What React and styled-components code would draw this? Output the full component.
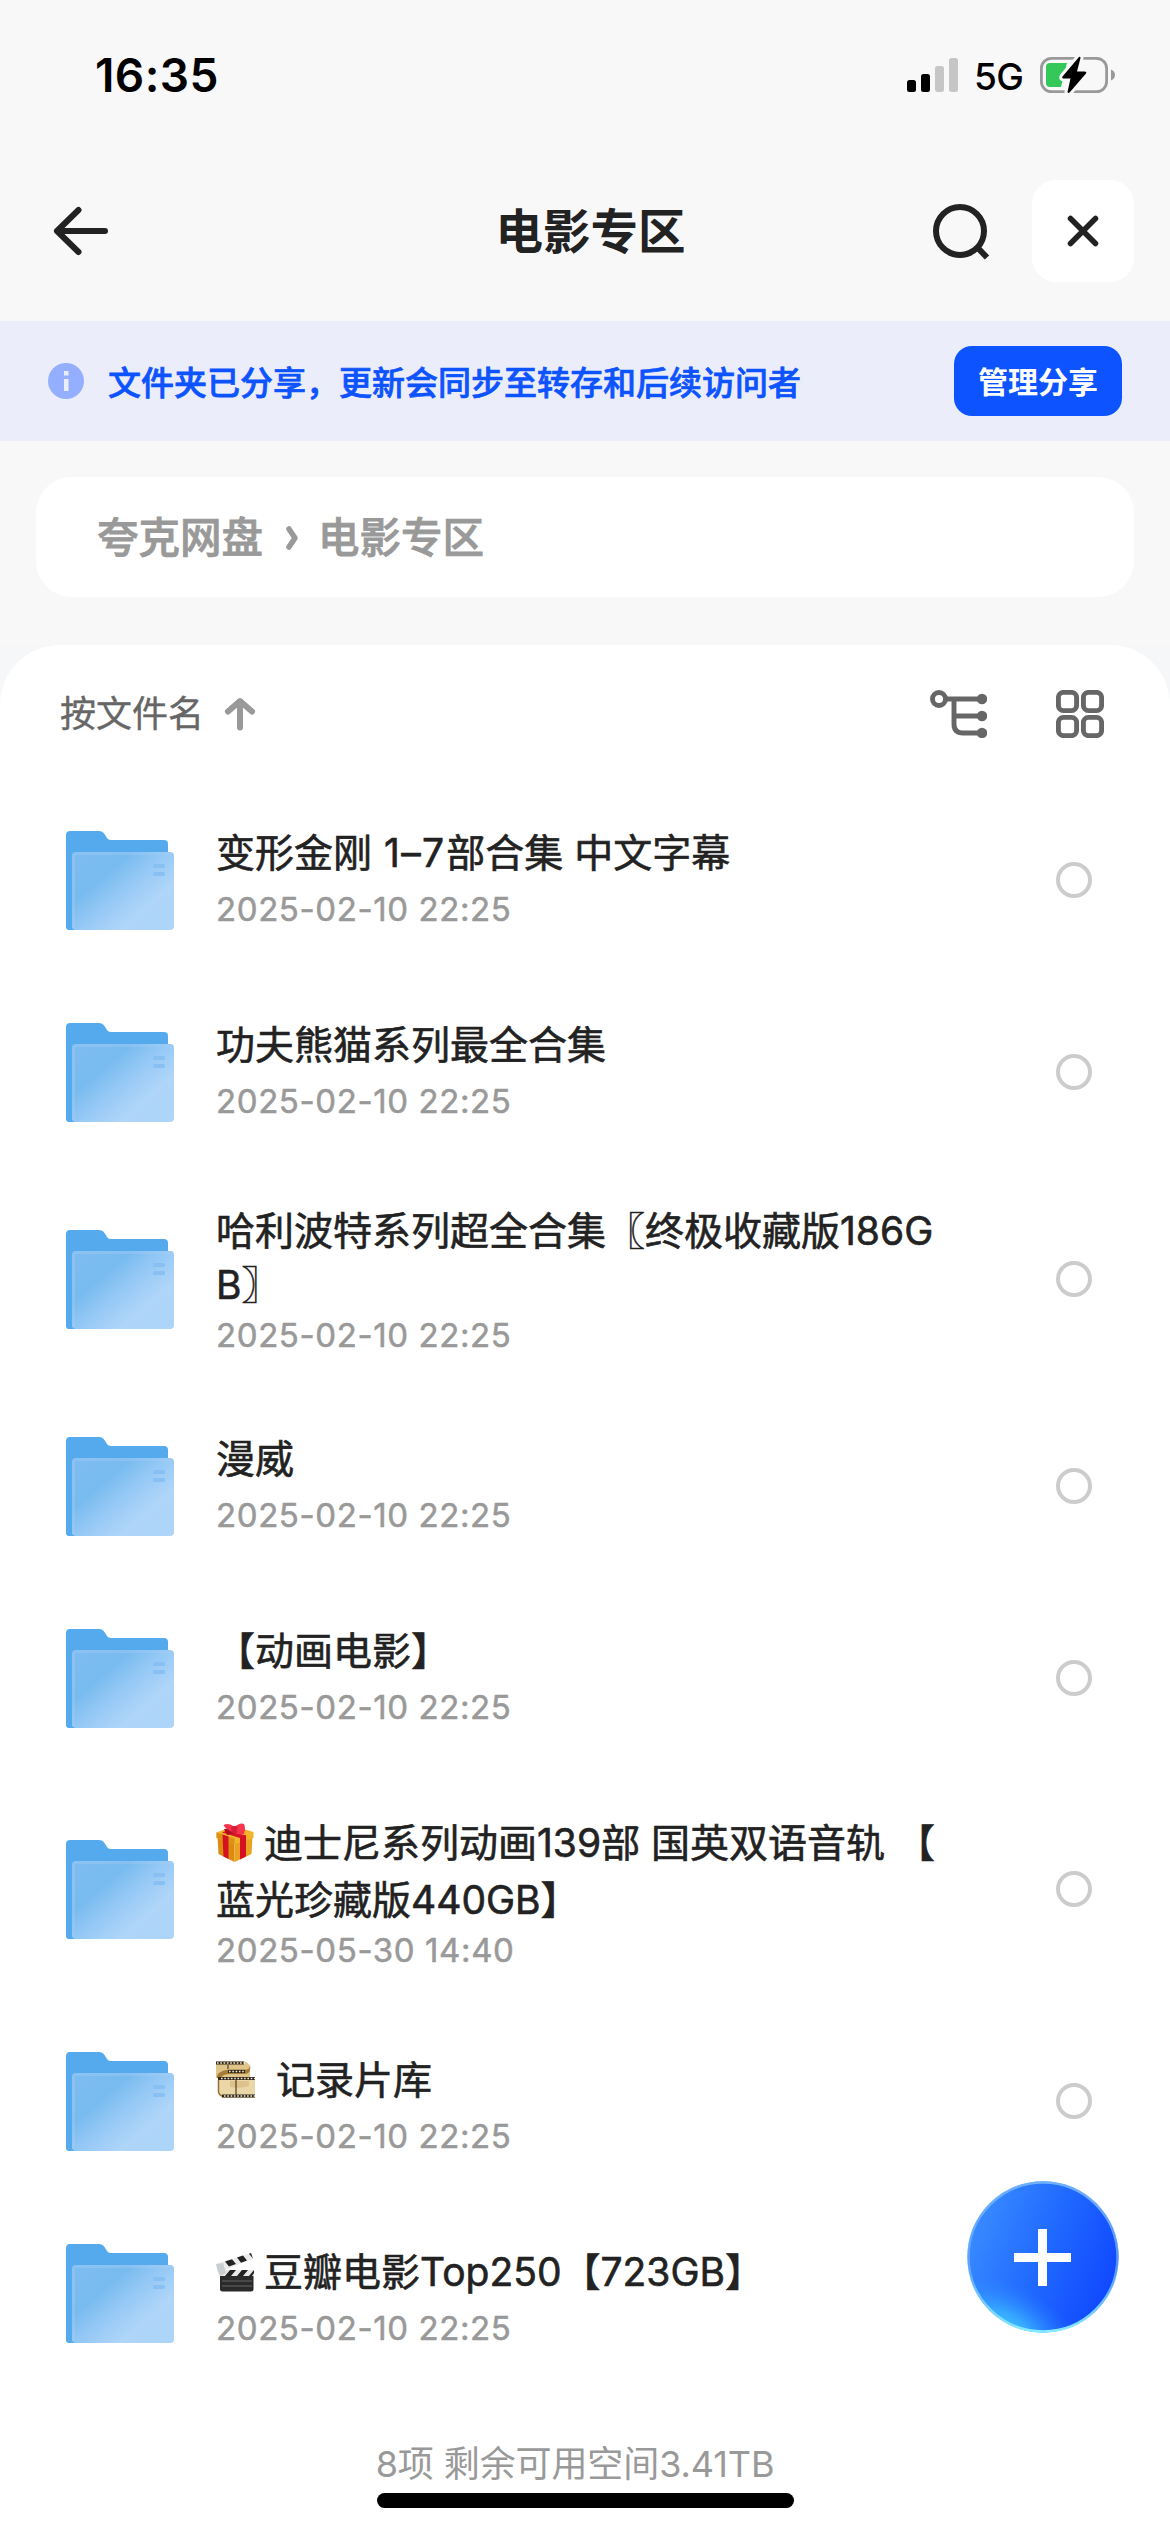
import React from 'react';
import styled, { createGlobalStyle } from 'styled-components';

const Global = createGlobalStyle`
  * { box-sizing: border-box; }
  body { margin: 0; background: #f8f8f8; }
`;

const Screen = styled.div`
  width: 1170px;
  height: 2532px;
  overflow: hidden;
  position: relative;
  display: flex;
  flex-direction: column;
  background: #f8f8f8;
  color: #222;
  font-family: Inter, "Noto Sans CJK SC", sans-serif;
`;

const StatusBar = styled.div`
  height: 141px;
  padding: 9px 55px 0 95px;
  display: flex;
  align-items: center;
  justify-content: space-between;
  color: #000;
`;
const Clock = styled.div`
  font-size: 46px;
  font-weight: 600;
  line-height: 54px;
  letter-spacing: 0.4px;
`;
const StatusIcons = styled.div`
  display: flex;
  align-items: center;
`;
const Network = styled.div`
  width: 51px;
  margin: 3px 15px 0 16px;
  font-size: 37px;
  font-weight: 500;
  line-height: 44px;
  letter-spacing: -0.7px;
  white-space: nowrap;
`;

const NavBar = styled.header`
  height: 180px;
  padding: 39px 36px 39px 50px;
  display: grid;
  grid-template-columns: 212px 1fr 212px;
  align-items: center;
`;
const Title = styled.h1`
  margin: 0;
  padding: 2px 3px 0 0;
  text-align: center;
  font-size: 47.5px;
  line-height: 60px;
  font-weight: 700;
`;
const NavActions = styled.div`
  display: flex;
  align-items: center;
  justify-content: flex-end;
  gap: 39px;
`;
const CloseButton = styled.button`
  width: 102px;
  height: 102px;
  padding: 0;
  border: 0;
  border-radius: 24px;
  background: #fff;
  display: grid;
  place-items: center;
`;

const Banner = styled.div`
  height: 120px;
  padding: 0 48px;
  display: flex;
  align-items: center;
  background: #ebeefa;
`;
const BannerText = styled.div`
  flex: 1;
  margin-left: 24px;
  padding-top: 4px;
  font-size: 33px;
  line-height: 48px;
  font-weight: 500;
  color: #0d53ff;
  -webkit-text-stroke: 0.7px currentColor;
`;
const ManageButton = styled.button`
  width: 168px;
  height: 70px;
  padding: 1px 0 0;
  border: 0;
  border-radius: 18px;
  background: #0d53ff;
  color: #fff;
  font: 700 30px/44px Inter, "Noto Sans CJK SC", sans-serif;
`;

const Crumbs = styled.nav`
  height: 120px;
  margin: 36px 36px 48px;
  padding: 2px 61px 0;
  border-radius: 36px;
  background: #fff;
  display: flex;
  align-items: center;
  font-size: 41.5px;
  line-height: 60px;
  font-weight: 500;
  color: #999;
  -webkit-text-stroke: 0.8px currentColor;
`;

const PanelWrap = styled.div`
  flex: 1;
  background: #f5f7f9;
`;
const Panel = styled.main`
  height: 100%;
  border-radius: 60px 60px 0 0;
  background: #fff;
  display: flex;
  flex-direction: column;
`;
const SortBar = styled.div`
  height: 139px;
  padding: 0 66px 0 60px;
  display: flex;
  align-items: center;
`;
const SortLabel = styled.div`
  flex: 1;
  display: flex;
  align-items: center;
  gap: 20px;
  font-size: 36px;
  line-height: 52px;
  color: #666;
  -webkit-text-stroke: 0.4px currentColor;
  padding-bottom: 1px;
`;
const ViewIcons = styled.div`
  display: flex;
  align-items: center;
  gap: 69px;
  padding-bottom: 1px;
`;

const Row = styled.div`
  height: ${p => p.$height}px;
  padding: 0 78px 0 66px;
  display: flex;
  align-items: center;
`;
const RowText = styled.div`
  flex: 1;
  align-self: flex-start;
  margin-left: 42px;
  padding-top: ${p => p.$top}px;
`;
const Name = styled.div`
  font-size: 39px;
  line-height: ${p => p.$line}px;
  -webkit-text-stroke: 0.6px currentColor;
`;
const NameLine = styled.div`
  height: ${p => p.$line}px;
  display: flex;
  align-items: center;
  white-space: pre;
`;
const Range = styled.span`
  letter-spacing: 1.3px;
  padding: 0 1px;
`;
const Emoji = styled.svg`
  width: 39px;
  height: 39px;
  flex: none;
  margin-right: ${p => p.$gap}px;
`;
const Stamp = styled.div`
  margin-top: ${p => p.$gap}px;
  font-size: 33px;
  line-height: 42px;
  letter-spacing: 0.6px;
  color: #999;
  -webkit-text-stroke: 0.5px currentColor;
`;
const Radio = styled.span`
  width: 36px;
  height: 36px;
  margin-bottom: 1px;
  border: 4px solid #ccc;
  border-radius: 50%;
  visibility: ${p => (p.$hidden ? 'hidden' : 'visible')};
`;

const Footer = styled.footer`
  flex: 1;
  display: flex;
  flex-direction: column;
  align-items: center;
  padding-top: 49px;
  font-size: 36px;
  line-height: 52px;
  color: #999;
`;
const Usage = styled.div`
  padding-right: 20px;
  letter-spacing: -0.1px;
`;
const HomeIndicator = styled.div`
  width: 417px;
  height: 15px;
  margin-top: 3px;
  border-radius: 8px;
  background: #000;
`;

const Fab = styled.button`
  position: absolute;
  left: 967px;
  top: 2181px;
  width: 152px;
  height: 152px;
  padding: 0;
  border: 0;
  background: none;
  svg { display: block; }
`;

const Signal = () => (
  <svg width="51" height="36" viewBox="0 0 51 36">
    <rect x="0" y="23" width="9" height="12" rx="2.5" />
    <rect x="14" y="17" width="9" height="18" rx="2.5" />
    <rect x="28" y="9" width="9" height="26" rx="2.5" fill="#c6c6c6" />
    <rect x="42" y="1" width="9" height="34" rx="2.5" fill="#c6c6c6" />
  </svg>
);

const Battery = () => (
  <svg width="75" height="38" viewBox="0 0 75 38">
    <rect x="1.4" y="2.4" width="65.2" height="33.2" rx="10" fill="none" stroke="#999" strokeWidth="2.8" />
    <path d="M71 13.5c2.6 1 4 3 4 5.500s-1.400 4.500-4 5.500z" fill="#999" />
    <path d="M10 7H27L21 31H10a4 4 0 0 1-4-4V11a4 4 0 0 1 4-4z" fill="#34c759" />
    <path d="M39 1L22.500 20.500Q21.500 22.500 24 22.500H30.500L27.500 36Q28 38 30 36L46 17.500Q47 15.500 44.500 15.500H37L40.500 2Q40.500 0 39 1z" fill="#000" stroke="#f8f8f8" strokeWidth="6" paintOrder="stroke" strokeLinejoin="round" />
  </svg>
);

const BackIcon = () => (
  <svg width="62" height="54" viewBox="0 0 62 54" fill="none" stroke="#222" strokeWidth="6" strokeLinecap="round" strokeLinejoin="round">
    <path d="M55 27H7M28.500 6L7 27L28.500 48" />
  </svg>
);
const SearchIcon = () => (
  <svg width="60" height="60" viewBox="0 0 60 60" fill="none" stroke="#222" strokeWidth="6">
    <circle cx="27" cy="30" r="24" />
    <path d="M44 46L54 56.500" />
  </svg>
);
const CloseIcon = () => (
  <svg width="36" height="36" viewBox="0 0 36 36" fill="none" stroke="#222" strokeWidth="5.500" strokeLinecap="round">
    <path d="M5.500 5.500L30.500 30.500M30.500 5.500L5.500 30.500" />
  </svg>
);
const InfoIcon = () => (
  <svg width="36" height="36" viewBox="0 0 36 36">
    <circle cx="18" cy="18" r="18" fill="#94afff" />
    <path d="M16 8h4.500v4.500H16zM16 16h4.500v12H16z" fill="#ebeefa" />
  </svg>
);
const CrumbArrow = styled.svg`
  width: 16px;
  height: 28px;
  margin: 0 18px 0 21px;
`;
const UpArrow = () => (
  <svg width="32" height="34" viewBox="0 0 32 34" fill="none" stroke="#999" strokeWidth="6" strokeLinejoin="round" strokeLinecap="round">
    <path d="M4 14.500L16 4L28 14.500M16 5V30.500" />
  </svg>
);
const TreeIcon = () => (
  <svg width="57" height="48" viewBox="0 0 57 48" fill="none" stroke="#666" strokeWidth="4.900">
    <circle cx="9" cy="9" r="6.500" />
    <path d="M16 9H52M24 9V34Q24 43 33 43H52M24 26H52" />
    <g fill="#666" stroke="none">
      <circle cx="52" cy="9" r="5.200" />
      <circle cx="52" cy="26" r="5.200" />
      <circle cx="52" cy="43" r="5.200" />
    </g>
  </svg>
);
const GridIcon = () => (
  <svg width="48" height="48" viewBox="0 0 48 48" fill="none" stroke="#666" strokeWidth="4.900">
    <rect x="2.400" y="2.400" width="18.200" height="18.200" rx="5" />
    <rect x="27.400" y="2.400" width="18.200" height="18.200" rx="5" />
    <rect x="2.400" y="27.400" width="18.200" height="18.200" rx="5" />
    <rect x="27.400" y="27.400" width="18.200" height="18.200" rx="5" />
  </svg>
);

const Folder = () => (
  <svg width="108" height="99" viewBox="0 0 108 99">
    <defs>
      <linearGradient id="front" x1="0.050" y1="0.150" x2="0.850" y2="0.850">
        <stop offset="0" stopColor="#7dbcf0" />
        <stop offset="0.280" stopColor="#78bbef" />
        <stop offset="0.520" stopColor="#94c8f5" />
        <stop offset="0.820" stopColor="#afd5f9" />
        <stop offset="1" stopColor="#add4f9" />
      </linearGradient>
    </defs>
    <path d="M4 0H33Q36.500 0 38.500 3L41 7Q42 9 45 9H98Q102 9 102 13V50H6V96Q6 99 3 99Q0 99 0 95V4Q0 0 4 0z" fill="#55aaee" />
    <path d="M0 90H12V99H4Q0 99 0 95z" fill="#55aaee" />
    <rect x="6" y="21" width="102" height="78" rx="4" fill="url(#front)" />
    <path d="M7.500 97V25Q7.500 22.500 10 22.500H106" fill="none" stroke="#a5cff5" strokeOpacity="0.350" strokeWidth="3" />
    <rect x="87" y="33" width="12" height="4" rx="1.500" fill="#89c0f3" />
    <rect x="87" y="41" width="12" height="4" rx="1.500" fill="#89c0f3" />
  </svg>
);

const Gift = () => (
  <Emoji $gap={9} viewBox="0 0 39 39">
    <path d="M1.500 13L18.500 20V39L2.500 31z" fill="#dc8a10" />
    <path d="M18.500 20L36.500 13L35.500 31L18.500 39z" fill="#e9a320" />
    <path d="M0.500 9.500L18 3L37.500 9V15L18.500 21L0.500 15z" fill="#f2b42c" />
    <path d="M0.500 9.500L18.500 15.500V21L0.500 15z" fill="#dd9216" />
    <path d="M6.500 11.500L12.500 13.500V36L7.500 33.500zM24 14L30 12V33.500L24 36.500z" fill="#d41022" />
    <path d="M6 9.500L11 7.500L30 12.500L24 15z" fill="#d9142a" />
    <path d="M8 6L17 5L20 10L11 12z" fill="#b00d20" />
    <path d="M18 10Q9 6 7.500 2Q13-1 18.500 4Q24-1 28 1Q30 5 28 11Q22 12 18 10z" fill="#f5354b" />
    <path d="M15 4Q18.500 2 21.500 4L21 10Q18 11 15.500 9z" fill="#d91d38" />
  </Emoji>
);
const Film = () => (
  <Emoji $gap={21} viewBox="0 0 39 39">
    <path d="M0 0.500H28Q34 1.500 34 7V17H0z" fill="#e0c58a" />
    <path d="M2 16H39V37H8Q2.500 36 2 31z" fill="#ead6a6" />
    <path d="M14 20H33V25Q25 28 14 26z" fill="#d3b57a" opacity="0.600" />
    <path d="M1 17Q0 10 14 8.500H31Q34 8 34 3Q36 13 28 13H13Q5 13.500 5 18z" fill="#a67b35" />
    <path d="M0 2H28M12 10.500H29M2 17.500H39M6 35H39" stroke="#33271a" strokeWidth="3.200" fill="none" />
    <path d="M1 2H30M13 10.500H29M5 17.500H39M8 35H39" stroke="#f4ecd5" strokeWidth="1.500" strokeDasharray="1.600 1.700" fill="none" />
    <path d="M12 4V8M20 19V34" stroke="#5b482b" strokeWidth="1.300" />
    <path d="M2.500 19V31Q3 34 6 35" stroke="#967039" strokeWidth="1.500" fill="none" />
  </Emoji>
);
const Clapper = () => (
  <Emoji $gap={9} viewBox="0 0 39 39">
    <path d="M0 11L35 0L37 5.500L4 19z" fill="#ececec" />
    <path d="M9 8.500L16 6.200L20 11L13 13.500zM21 4.500L27 2.500L31 7.500L25 9.800zM33 0.700L35 0L37 5.500z" fill="#222" />
    <path d="M4 17H37.500V36Q37.500 38.500 35 38.500H6.500Q4 38.500 4 36z" fill="#2a2a2a" />
    <path d="M4 17H38V23H4z" fill="#e8e8e8" />
    <path d="M14 17H20L15 23H9zM26 17H32L27 23H21zM38 17V20L36 23H33z" fill="#222" />
    <path d="M0 11L7 10L10 20L4 23Q1 18 0 11z" fill="#c9ced1" />
    <path d="M6 28H36M6 33H36" stroke="#666" strokeWidth="1" />
  </Emoji>
);

const files = [
  { lines: [<>变形金刚 <Range>1–7</Range>部合集 中文字幕</>], date: '2025-02-10 22:25' },
  { lines: ['功夫熊猫系列最全合集'], date: '2025-02-10 22:25' },
  { lines: ['哈利波特系列超全合集〖终极收藏版186G', 'B〗'], date: '2025-02-10 22:25', height: 222, top: 36, gap: 2 },
  { lines: ['漫威'], date: '2025-02-10 22:25' },
  { lines: ['【动画电影】'], date: '2025-02-10 22:25' },
  { icon: <Gift />, lines: ['迪士尼系列动画139部 国英双语音轨 【', '蓝光珍藏版440GB】'], date: '2025-05-30 14:40', height: 231, top: 40, line: 57, gap: 1 },
  { icon: <Film />, lines: ['记录片库'], date: '2025-02-10 22:25', top: 48 },
  { icon: <Clapper />, lines: ['豆瓣电影Top250【723GB】'], date: '2025-02-10 22:25', top: 48, covered: true },
];

function FileRow({ file }) {
  const line = file.line || 54;
  return (
    <Row $height={file.height || 192}>
      <Folder />
      <RowText $top={file.top || 42}>
        <Name $line={line}>
          {file.lines.map((text, i) => (
            <NameLine key={i} $line={line}>
              {i === 0 && file.icon}
              <span>{text}</span>
            </NameLine>
          ))}
        </Name>
        <Stamp $gap={file.gap || 8}>{file.date}</Stamp>
      </RowText>
      <Radio $hidden={file.covered} />
    </Row>
  );
}

export default function App() {
  return (
    <Screen>
      <Global />
      <StatusBar>
        <Clock>16:35</Clock>
        <StatusIcons>
          <Signal />
          <Network>5G</Network>
          <Battery />
        </StatusIcons>
      </StatusBar>
      <NavBar>
        <BackIcon />
        <Title>电影专区</Title>
        <NavActions>
          <SearchIcon />
          <CloseButton><CloseIcon /></CloseButton>
        </NavActions>
      </NavBar>
      <Banner>
        <InfoIcon />
        <BannerText>文件夹已分享，更新会同步至转存和后续访问者</BannerText>
        <ManageButton>管理分享</ManageButton>
      </Banner>
      <Crumbs>
        <span>夸克网盘</span>
        <CrumbArrow viewBox="0 0 16 28" fill="none" stroke="#999" strokeWidth="5.500" strokeLinecap="round" strokeLinejoin="round">
          <path d="M5 5L11 14L5 23" />
        </CrumbArrow>
        <span>电影专区</span>
      </Crumbs>
      <PanelWrap>
        <Panel>
          <SortBar>
            <SortLabel>按文件名<UpArrow /></SortLabel>
            <ViewIcons>
              <TreeIcon />
              <GridIcon />
            </ViewIcons>
          </SortBar>
          {files.map((file, i) => <FileRow key={i} file={file} />)}
          <Footer>
            <Usage>8项 剩余可用空间3.41TB</Usage>
            <HomeIndicator />
          </Footer>
        </Panel>
      </PanelWrap>
      <Fab>
        <svg width="152" height="152" viewBox="0 0 152 152">
          <defs>
            <linearGradient id="fab" x1="0" y1="0.300" x2="1" y2="0.700">
              <stop offset="0" stopColor="#3a8cff" />
              <stop offset="0.500" stopColor="#2069ff" />
              <stop offset="1" stopColor="#1046ff" />
            </linearGradient>
            <radialGradient id="glow" gradientUnits="userSpaceOnUse" cx="0" cy="0" r="1" gradientTransform="translate(38 150) rotate(28) scale(85 48)">
              <stop offset="0" stopColor="#41c8ff" />
              <stop offset="0.350" stopColor="#39b2ff" stopOpacity="0.850" />
              <stop offset="1" stopColor="#2a80ff" stopOpacity="0" />
            </radialGradient>
            <linearGradient id="rim" x1="0.400" y1="0" x2="0.400" y2="1">
              <stop offset="0" stopColor="#6fb0fb" />
              <stop offset="0.550" stopColor="#6fb0fb" stopOpacity="0.700" />
              <stop offset="1" stopColor="#86ecff" />
            </linearGradient>
          </defs>
          <circle cx="76" cy="76" r="75.500" fill="url(#fab)" />
          <circle cx="76" cy="76" r="75.500" fill="url(#glow)" />
          <circle cx="76" cy="76" r="74.500" fill="none" stroke="url(#rim)" strokeWidth="2.500" />
          <path d="M71 48h9v24h24v9H80v24h-9V81H47v-9h24z" fill="#fff" />
        </svg>
      </Fab>
    </Screen>
  );
}
